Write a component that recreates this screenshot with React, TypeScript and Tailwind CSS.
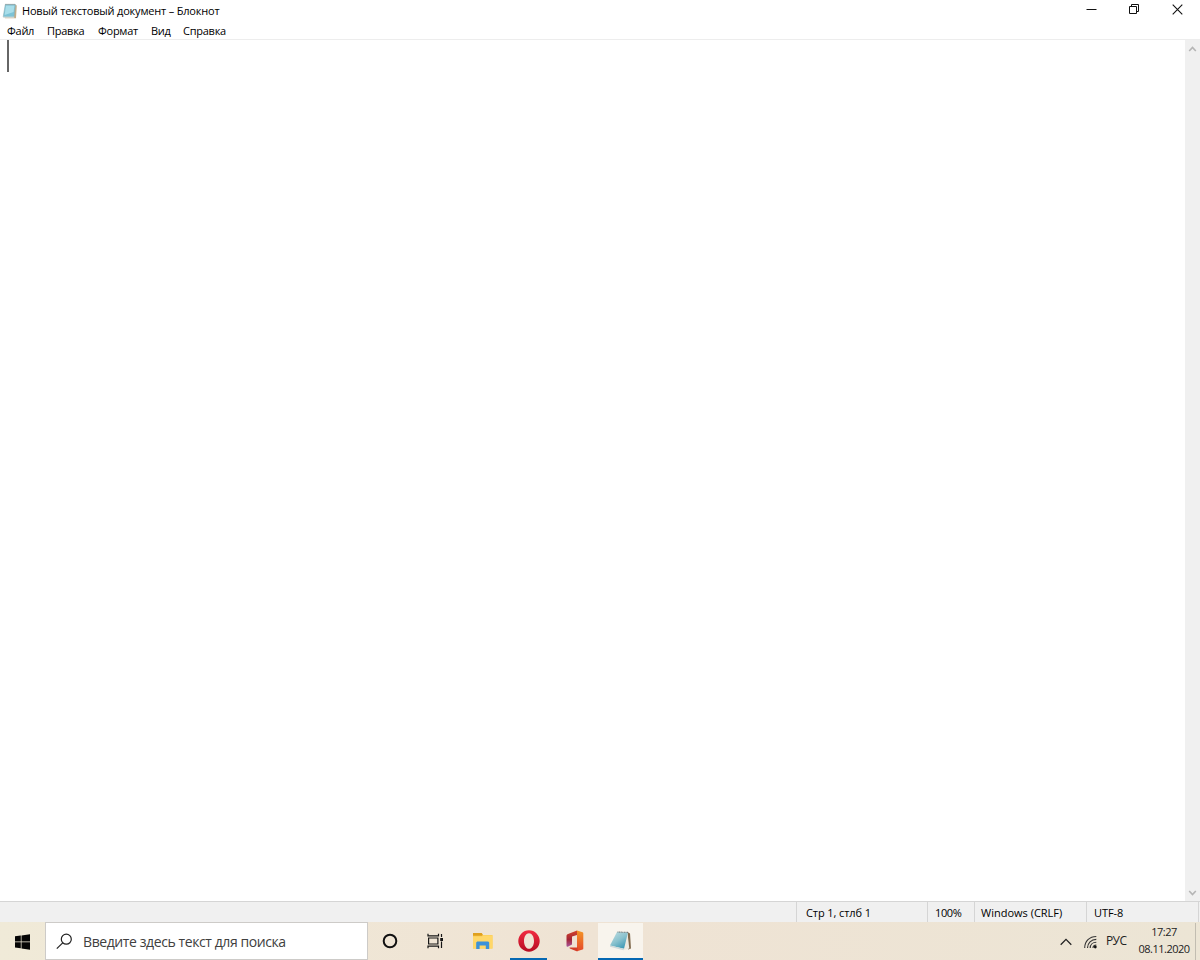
import type { ReactNode } from "react";

const menuItems = [
  { label: "Файл", style: "w-[27px] mr-[13px]" },
  { label: "Правка", style: "w-[38px] mr-[13px]" },
  { label: "Формат", style: "w-[41px] mr-[12px]" },
  { label: "Вид", style: "w-[20px] mr-[12px]" },
  { label: "Справка", style: "w-[44px]" },
];

const statusItems = [
  { label: "Стр 1, стлб 1", style: "w-[131px] pl-[9px] tracking-[-0.1px]" },
  { label: "100%", style: "w-[47px] pl-[7px] tracking-[-0.4px]" },
  { label: "Windows (CRLF)", style: "w-[112px] pl-[6px] tracking-normal" },
  { label: "UTF-8", style: "w-[113px] border-r pl-[7px] tracking-[-0.1px]" },
];

function NotepadSmallIcon() {
  return (
    <svg width="16" height="16" viewBox="0 0 16 16" className="shrink-0">
      <path d="M13 1.5 14.8 2.5 14 15.3 3 15.3 2.5 14Z" fill="#c3ad89" />
      <path d="M3.3 1.5H13.4L12 14H1.2Z" fill="#7cc3d6" stroke="#8eaeb5" strokeWidth=".6" />
      <path d="M4 2.5H12.4L11.6 9 2.6 12Z" fill="#a9deea" />
      <path d="M1 14.2H12.2" stroke="#dce4e4" />
      <path d="M4 2.2V.8M6 2.2V.8M8 2.2V.8M10 2.2V.8M12 2.2V.8" stroke="#808a8c" strokeWidth=".8" />
    </svg>
  );
}

function NotepadIcon() {
  return (
    <svg width="23" height="22" viewBox="0 0 23 22">
      <defs>
        <linearGradient id="page" x1="0" y1="0" x2=".7" y2="1">
          <stop offset="0" stopColor="#c2dfe3" />
          <stop offset=".55" stopColor="#8ac2ce" />
          <stop offset="1" stopColor="#3d99b5" />
        </linearGradient>
      </defs>
      <path d="M18.5 2 21 3.5 22 18.5 19 19.5Z" fill="#806a4e" />
      <path d="M18.5 3 20.3 18.5 14.5 20.3Z" fill="#eeeae0" />
      <path d="M8 2 19 2.5 15 18.8 1 15.5Z" fill="url(#page)" />
      <path d="M1 15.5 15 18.8 14.5 20.2 1 16.8Z" fill="#cfd9d9" />
      <path d="M8.5 2 19 2.4" stroke="#6b7576" strokeWidth="1.1" strokeDasharray="1 .6" />
    </svg>
  );
}

function FolderIcon() {
  return (
    <svg width="20" height="18" viewBox="0 0 20 18" className="ml-px">
      <path d="M0 1h8.7l1.3 2h9.5v13.5H0Z" fill="#f9ca54" />
      <path d="M0 1h8.7l1 1.7-.7 1.1H0Z" fill="#dfa01e" />
      <path d="M0 4.6h9l1-1h9.5v12.9H0Z" fill="#ffd768" />
      <path d="M3.2 17v-6.5l1-1h11l1 1V17h-3.4v-3.5H6.6V17Z" fill="#3c92d9" />
    </svg>
  );
}

function OperaIcon() {
  return (
    <svg width="22" height="22" viewBox="0 0 22 22">
      <defs>
        <linearGradient id="opera" x1="0" y1="0" x2="0" y2="1">
          <stop stopColor="#f22c43" />
          <stop offset="1" stopColor="#b60d22" />
        </linearGradient>
      </defs>
      <path
        d="M11 .3a10.7 10.7 0 1 0 0 21.4A10.7 10.7 0 0 0 11 .3Zm0 2.9c2.8 0 5 3.3 5 7.8s-2.2 7.8-5 7.8-5-3.3-5-7.8 2.2-7.8 5-7.8Z"
        fill="url(#opera)"
        fillRule="evenodd"
      />
    </svg>
  );
}

function OfficeIcon() {
  return (
    <svg width="18" height="22" viewBox="0 0 18 22">
      <defs>
        <linearGradient id="officeRight" x1="0" y1="0" x2="0" y2="1">
          <stop stopColor="#f39526" />
          <stop offset="1" stopColor="#e5482a" />
        </linearGradient>
        <linearGradient id="officeLeft" x1="0" y1="0" x2="0" y2="1">
          <stop stopColor="#d4452a" />
          <stop offset=".55" stopColor="#a42536" />
          <stop offset="1" stopColor="#a8569b" />
        </linearGradient>
      </defs>
      <path d="M11 .6 16.6 2.2Q17.3 2.5 17.3 3.2V18.6Q17.3 19.4 16.6 19.6L11 21.3Z" fill="url(#officeRight)" />
      <path d="M11 .6V5.1L6 6.5V14.6L1.7 16.7Q.5 16.9.5 15.5V5.8Q.5 4.8 1.4 4.3Z" fill="url(#officeLeft)" />
      <path d="M3.5 17.6H11.5V21.3H10.6L3.8 18.6Z" fill="#d33d29" />
    </svg>
  );
}

function TaskButton(props: { width: string; active?: boolean; open?: boolean; children: ReactNode }) {
  return (
    <div
      className={`flex h-[37px] flex-col items-center justify-center border-b-2 ${props.width} ${
        props.active ? "bg-[#f8f4ed]" : ""
      } ${props.open ? "border-[#0568b3]" : "border-transparent"}`}
    >
      {props.children}
    </div>
  );
}

function TitleBar() {
  return (
    <header className="flex h-[21px] items-start">
      <div className="flex h-[21px] items-center pl-[2px]">
        <NotepadSmallIcon />
        <h1 className="ml-[4px] w-[210px] whitespace-nowrap pt-[2px] text-[11px] tracking-[-0.19px]">
          Новый текстовый документ – Блокнот
        </h1>
      </div>
      <div className="ml-auto flex h-[19px] items-center">
        <button className="flex w-[43px] justify-center" aria-label="Свернуть">
          <svg width="11" height="11" viewBox="0 0 11 11">
            <path d="M.5 5.5h10" stroke="#111" />
          </svg>
        </button>
        <button className="flex w-[42px] justify-center" aria-label="Развернуть">
          <svg width="11" height="11" viewBox="0 0 11 11" fill="none" stroke="#111">
            <path d="M.5 2.5h7v7h-7zM2.5 2.5v-2h7v7h-2" />
          </svg>
        </button>
        <button className="flex w-[45px] justify-center pr-px" aria-label="Закрыть">
          <svg width="11" height="11" viewBox="0 0 11 11">
            <path d="m.7.7 9.6 9.6M10.3.7.7 10.3" stroke="#111" strokeWidth="1.1" />
          </svg>
        </button>
      </div>
    </header>
  );
}

function Editor() {
  return (
    <main className="flex h-[861px]">
      <div className="flex-1 bg-white pl-[7px]">
        <div className="h-8 w-[2px] bg-[#666]" />
      </div>
      <div className="flex w-[15px] flex-col items-center justify-between bg-[#f0f0f0] pt-[5px] pb-[4px]">
        <svg width="9" height="8" viewBox="0 0 9 8">
          <path d="m1.2 6 3.3-3.5L7.8 6" fill="none" stroke="#b5b5b5" strokeWidth="1.6" />
        </svg>
        <svg width="9" height="8" viewBox="0 0 9 8">
          <path d="m1.2 2 3.3 3.5L7.8 2" fill="none" stroke="#b5b5b5" strokeWidth="1.6" />
        </svg>
      </div>
    </main>
  );
}

function Taskbar() {
  return (
    <footer className="flex h-[38px] items-end bg-linear-to-r from-[#f0ead8] via-[#efe3d4] to-[#ece5d5]">
      <button className="flex h-[37px] w-[45px] items-center justify-center" aria-label="Пуск">
        <svg width="15" height="16" viewBox="0 0 15 16" fill="#050505">
          <path d="M0 2.3 5.8 1.5v6H0zM6.5 1.4 15 .2v7.3H6.5zM0 8.3h5.8v6L0 13.5zM6.5 8.3H15v7.5l-8.5-1.2z" />
        </svg>
      </button>
      <div className="flex h-[38px] w-[323px] items-center border border-[#cdcbc8] bg-white pl-[10px]">
        <svg width="17" height="17" viewBox="0 0 17 17" fill="none" stroke="#222" strokeWidth="1.2">
          <circle cx="10.3" cy="6.2" r="5" />
          <path d="M6.7 9.8.8 15.7" />
        </svg>
        <span className="ml-[10px] whitespace-nowrap text-[14px] tracking-[-0.41px] text-[#404040]">
          Введите здесь текст для поиска
        </span>
      </div>
      <TaskButton width="w-[44px]">
        <svg width="16" height="16" viewBox="0 0 16 16">
          <circle cx="8" cy="8" r="6.3" fill="none" stroke="#111" strokeWidth="2" />
        </svg>
      </TaskButton>
      <TaskButton width="w-[46px]">
        <svg width="17" height="16" viewBox="0 0 17 16" fill="none" stroke="#161616" strokeWidth="1.2">
          <path d="M1 .8v2h10.5v-2M1 15.2v-2h10.5v2M1.6 5h9.3v6H1.6z" />
          <path d="M14.5 1v3M14.5 8.5V15" />
          <path d="M13.2 5h2.8v3h-2.8z" fill="#161616" stroke="none" />
        </svg>
      </TaskButton>
      <TaskButton width="w-[48px]"><FolderIcon /></TaskButton>
      <div className="w-[4px]" />
      <TaskButton width="w-[37px]" open><OperaIcon /></TaskButton>
      <div className="w-[5px]" />
      <TaskButton width="w-[45px]"><OfficeIcon /></TaskButton>
      <div className="w-px" />
      <TaskButton width="w-[45px]" active open><NotepadIcon /></TaskButton>
      <div className="ml-auto flex h-[37px] items-center text-[#222]">
        <svg width="12" height="8" viewBox="0 0 12 8" className="mr-[12px]">
          <path d="m.7 6.7 5.3-5.3 5.3 5.3" fill="none" stroke="#222" strokeWidth="1.3" />
        </svg>
        <svg width="13" height="14" viewBox="0 0 13 14" fill="none" stroke="#333" strokeWidth="1.1" className="mr-[9px]">
          <path d="M.7 13C.7 6.2 5.5 1.5 12.3 1.5M3.5 13c0-5 3.8-8.6 8.8-8.6M6.2 13c0-3.3 2.6-5.7 6.1-5.7" />
          <path d="M9 13c0-1.6 1.4-3 3.3-3" />
          <circle cx="11.3" cy="12" r="1.4" fill="#111" stroke="none" />
        </svg>
        <span className="w-[27px] pb-px text-[12px] tracking-[-0.6px]">РУС</span>
        <div className="flex w-[62px] flex-col items-center pb-[4px] text-[11px] leading-[17px] tracking-[-0.5px]">
          <span>17:27</span>
          <span>08.11.2020</span>
        </div>
        <div className="mr-[4px] h-[37px] w-px bg-[#c2bdb1]" />
      </div>
    </footer>
  );
}

function App() {
  return (
    <div className="flex h-[960px] w-[1200px] flex-col overflow-hidden bg-white font-['Open_Sans','Noto_Sans',sans-serif] text-black">
      <TitleBar />
      <nav className="flex h-[19px] items-center border-b border-[#ededed] pl-[7px] pt-[2px] text-[11px] tracking-[-0.25px]">
        {menuItems.map((item) => (
          <button key={item.label} className={`whitespace-nowrap text-left ${item.style}`}>
            {item.label}
          </button>
        ))}
      </nav>
      <Editor />
      <div className="flex h-[21px] justify-end border-t border-[#d5d5d5] bg-[#f0f0f0] text-[11px]">
        <div className="flex pr-px">
          {statusItems.map((item) => (
            <div key={item.label} className={`flex items-center border-l border-[#d5d5d5] pt-[2px] whitespace-nowrap ${item.style}`}>
              {item.label}
            </div>
          ))}
        </div>
      </div>
      <Taskbar />
    </div>
  );
}

export default App;
